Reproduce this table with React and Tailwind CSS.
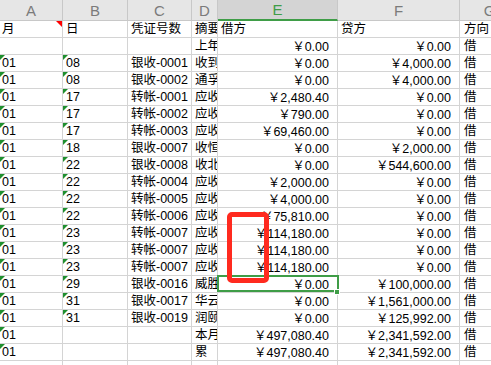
import React from 'react';

const rows = [
    { a: '月', b: '日', c: '凭证号数', d: '摘要', e: '借方', f: '贷方', g: '方向', head: true },
    { a: '', b: '', c: '', d: '上年', e: '0.00', f: '0.00', g: '借' },
    { a: '01', b: '08', c: '银收-0001', d: '收到', e: '0.00', f: '4,000.00', g: '借' },
    { a: '01', b: '08', c: '银收-0002', d: '通孚', e: '0.00', f: '4,000.00', g: '借' },
    { a: '01', b: '17', c: '转帐-0001', d: '应收', e: '2,480.40', f: '0.00', g: '借' },
    { a: '01', b: '17', c: '转帐-0002', d: '应收', e: '790.00', f: '0.00', g: '借' },
    { a: '01', b: '17', c: '转帐-0003', d: '应收', e: '69,460.00', f: '0.00', g: '借' },
    { a: '01', b: '18', c: '银收-0007', d: '收恒', e: '0.00', f: '2,000.00', g: '借' },
    { a: '01', b: '22', c: '银收-0008', d: '收北', e: '0.00', f: '544,600.00', g: '借' },
    { a: '01', b: '22', c: '转帐-0004', d: '应收', e: '2,000.00', f: '0.00', g: '借' },
    { a: '01', b: '22', c: '转帐-0005', d: '应收', e: '4,000.00', f: '0.00', g: '借' },
    { a: '01', b: '22', c: '转帐-0006', d: '应收', e: '75,810.00', f: '0.00', g: '借' },
    { a: '01', b: '23', c: '转帐-0007', d: '应收', e: '114,180.00', f: '0.00', g: '借' },
    { a: '01', b: '23', c: '转帐-0007', d: '应收', e: '114,180.00', f: '0.00', g: '借' },
    { a: '01', b: '23', c: '转帐-0007', d: '应收', e: '114,180.00', f: '0.00', g: '借' },
    { a: '01', b: '29', c: '银收-0016', d: '威胜', e: '0.00', f: '100,000.00', g: '借' },
    { a: '01', b: '31', c: '银收-0017', d: '华云', e: '0.00', f: '1,561,000.00', g: '借' },
    { a: '01', b: '31', c: '银收-0019', d: '润颐', e: '0.00', f: '125,992.00', g: '借' },
    { a: '01', b: '', c: '', d: '本月', e: '497,080.40', f: '2,341,592.00', g: '借' },
    { a: '01', b: '', c: '', d: '累', e: '497,080.40', f: '2,341,592.00', g: '借' },
    { a: '', b: '', c: '', d: '', e: '', f: '', g: '' },
];

const grid = 'grid grid-cols-[63px_65px_64px_26px_120px_122px_60px]';
const cell = 'relative h-[17px] border-r border-b border-[#d4d4d4] overflow-hidden whitespace-nowrap leading-[16px]';

function GreenTick() {
    return <span className="absolute left-0 top-0 w-0 h-0 border-t-[5px] border-r-[5px] border-t-[#1f8f2e] border-r-transparent" />;
}

function Money({ v }) {
    if (!v) return null;
    return (
        <span>
            <span className="font-['Noto_Sans_CJK_SC']">￥</span>
            {v}
        </span>
    );
}

function HeaderCell({ label, active }) {
    return (
        <div
            className={`h-[21px] flex items-center justify-center border-r border-[#c8c8c8] text-[15px] leading-none overflow-hidden ${
                active
                    ? 'bg-[#d4d4d4] text-[#3f9d47] border-b-2 border-b-[#3f9d47]'
                    : 'bg-[#e6e6e6] text-[#7b7b7b] border-b border-b-[#c8c8c8]'
            }`}
        >
            {label}
        </div>
    );
}

export default function App() {
    return (
        <div className="w-[491px] h-[365px] overflow-hidden bg-white text-black font-['Liberation_Sans','Noto_Sans_CJK_SC',sans-serif] text-[12.5px]">
            <div className="relative w-[520px]">
                <div className={grid}>
                    {['A', 'B', 'C', 'D', 'E', 'F', 'G'].map((l) => (
                        <HeaderCell key={l} label={l} active={l === 'E'} />
                    ))}
                </div>

                {rows.map((r, i) => (
                    <div key={i} className={grid}>
                        <div className={`${cell} pl-[2px]`}>
                            {r.a && !r.head && <GreenTick />}
                            {r.head && (
                                <span className="absolute right-0 top-0 w-0 h-0 border-t-[6px] border-l-[6px] border-t-[#ff0000] border-l-transparent" />
                            )}
                            {r.a}
                        </div>
                        <div className={`${cell} pl-[3px]`}>
                            {r.b && !r.head && <GreenTick />}
                            {r.b}
                        </div>
                        <div className={`${cell} pl-[3px]`}>{r.c}</div>
                        <div className={`${cell} pl-[3px]`}>{r.d}</div>
                        <div className={`${cell} ${r.head ? 'pl-[3px]' : 'text-right pr-[8px]'}`}>
                            {r.head ? r.e : <Money v={r.e} />}
                        </div>
                        <div className={`${cell} ${r.head ? 'pl-[3px]' : 'text-right pr-[8px]'}`}>
                            {r.head ? r.f : <Money v={r.f} />}
                        </div>
                        <div className={`${cell} pl-[4px]`}>{r.g}</div>
                    </div>
                ))}

                {/* selected cell E16 */}
                <div className="absolute left-[217px] top-[275px] w-[122px] h-[17px] border-2 border-[#3f9d47]" />
                <div className="absolute left-[334px] top-[289px] w-[6px] h-[6px] bg-[#3f9d47] border border-white" />

                {/* red annotation box */}
                <div className="absolute left-[227px] top-[212px] w-[42px] h-[71px] border-[5px] border-[#ff2a1f] rounded-[5px]" />
            </div>
        </div>
    );
}
